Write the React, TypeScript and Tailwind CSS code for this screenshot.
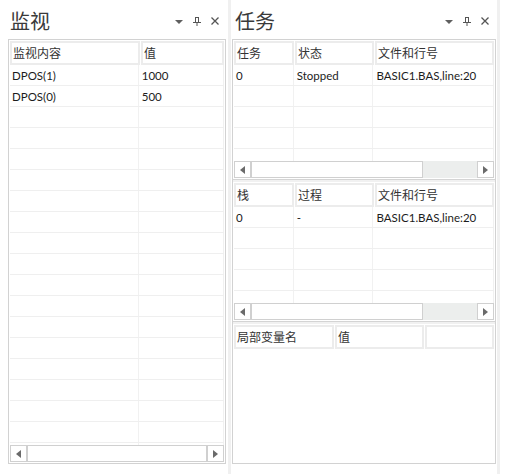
import React from "react";

const FONT = { fontFamily: 'Lato, "Noto Sans CJK SC", sans-serif' };

function TitleIcons() {
  return (
    <div className="flex items-center gap-[10px] text-[#5a5a5a]">
      <svg width="8" height="9" viewBox="0 0 8 9">
        <path d="M0 3 L8 3 L4 7 Z" fill="#5f5f5f" />
      </svg>
      <svg width="8" height="9" viewBox="0 0 8 9">
        <path d="M2.5 0.5 V5 M5.5 0.5 V5 M2 0.5 H6 M0 5.5 H8 M4 5.5 V9" stroke="#555" strokeWidth="1" fill="none" />
      </svg>
      <svg width="8" height="8" viewBox="0 0 8 8">
        <path d="M0.5 0.5 L7.5 7.5 M7.5 0.5 L0.5 7.5" stroke="#555" strokeWidth="1.3" fill="none" />
      </svg>
    </div>
  );
}

function Arrow({ dir }: { dir: "l" | "r" }) {
  return (
    <div className="w-[17px] h-[17px] border border-[#d0d0d0] bg-white flex items-center justify-center shrink-0">
      <svg width="5" height="8" viewBox="0 0 5 8">
        {dir === "l" ? <path d="M5 0 L0 4 L5 8 Z" fill="#6a6a6a" /> : <path d="M0 0 L5 4 L0 8 Z" fill="#6a6a6a" />}
      </svg>
    </div>
  );
}

function Scrollbar({ thumb }: { thumb?: number }) {
  return (
    <div className="h-[17px] flex shrink-0">
      <Arrow dir="l" />
      {thumb ? (
        <>
          <div className="h-[17px] border border-[#d0d0d0] bg-white" style={{ width: thumb }} />
          <div className="flex-1 bg-[#eceeed]" />
        </>
      ) : (
        <div className="flex-1 h-[17px] border border-[#d0d0d0] bg-white" />
      )}
      <Arrow dir="r" />
    </div>
  );
}

type Col = { w?: number; label: string };

function Header({ cols }: { cols: Col[] }) {
  return (
    <div className="flex h-[24px] shrink-0">
      {cols.map((c, i) => (
        <div
          key={i}
          className={`h-[24px] border-2 border-[#ececec] bg-white flex items-center pl-[1px] pt-[2px] text-[12px] text-[#333] ${c.w ? "shrink-0" : "flex-1"} ${i > 0 ? "ml-px" : ""}`}
          style={c.w ? { width: c.w } : undefined}
        >
          {c.label}
        </div>
      ))}
    </div>
  );
}

function Rows({ widths, data, count }: { widths: number[]; data: string[][]; count: number }) {
  const rows = [];
  for (let r = 0; r < count; r++) {
    const d = data[r] || [];
    rows.push(
      <div key={r} className="flex h-[21px] border-b border-[#efefef] shrink-0">
        {widths.map((w, i) => (
          <div
            key={i}
            className={`h-[20px] flex items-center pl-[2px] pt-[2px] text-[11.5px] text-[#1c1c1c] border-r border-[#f1f1f1] ${i > 0 ? "ml-px" : ""}`}
            style={{ width: w }}
          >
            {d[i] || ""}
          </div>
        ))}
        <div className="flex-1" />
      </div>
    );
  }
  return <div className="flex-1 flex flex-col overflow-hidden">{rows}</div>;
}

function Section({ cols, widths, data, thumb, scroll }: { cols: Col[]; widths: number[]; data: string[][]; thumb?: number; scroll: boolean }) {
  return (
    <div className="flex-1 flex flex-col min-h-0 px-px pt-px">
      <Header cols={cols} />
      <Rows widths={widths} data={data} count={20} />
      {scroll && <Scrollbar thumb={thumb} />}
      {scroll && <div className="h-px" />}
    </div>
  );
}

export default function App() {
  return (
    <div className="w-[507px] h-[474px] bg-white flex overflow-hidden" style={FONT}>
      {/* Left panel */}
      <div className="w-[226px] flex flex-col pl-2 pb-[10px]">
        <div className="h-[39px] flex items-center justify-between pl-[2px] pr-[7px] shrink-0">
          <span className="text-[20px] leading-none text-[#3a3a3a] mt-[2px]">监视</span>
          <div className="mt-[3px]"><TitleIcons /></div>
        </div>
        <div className="flex-1 w-[218px] border border-[#d2d2d2] flex flex-col min-h-0">
          <Section
            cols={[{ w: 130, label: "监视内容" }, { label: "值" }]}
            widths={[130, 85]}
            data={[["DPOS(1)", "1000"], ["DPOS(0)", "500"]]}
            scroll
          />
        </div>
      </div>
      {/* gutter */}
      <div className="w-[6px] flex">
        <div className="ml-[2px] w-[3px] h-full bg-[#f0f0f0]" />
      </div>
      {/* Right panel */}
      <div className="w-[264px] flex flex-col pb-[10px]">
        <div className="h-[39px] flex items-center justify-between pl-[3px] pr-[7px] shrink-0">
          <span className="text-[20px] leading-none text-[#3a3a3a] mt-[2px]">任务</span>
          <div className="mt-[3px]"><TitleIcons /></div>
        </div>
        <div className="flex-1 border border-[#d2d2d2] flex flex-col min-h-0">
          <Section
            cols={[{ w: 60, label: "任务" }, { w: 79, label: "状态" }, { label: "文件和行号" }]}
            widths={[60, 79, 120]}
            data={[["0", "Stopped", "BASIC1.BAS,line:20"]]}
            thumb={172}
            scroll
          />
          <div className="h-[3px] border-t border-[#d4d4d4] bg-[#f1f1f1] shrink-0" />
          <Section
            cols={[{ w: 60, label: "栈" }, { w: 79, label: "过程" }, { label: "文件和行号" }]}
            widths={[60, 79, 120]}
            data={[["0", "-", "BASIC1.BAS,line:20"]]}
            thumb={172}
            scroll
          />
          <div className="h-[3px] border-t border-[#d4d4d4] bg-[#f1f1f1] shrink-0" />
          <div className="flex-1 flex flex-col min-h-0 px-px pt-px">
            <Header cols={[{ w: 100, label: "局部变量名" }, { w: 89, label: "值" }, { label: "" }]} />
            <div className="flex-1" />
          </div>
        </div>
      </div>
      <div className="w-px" />
      <div className="w-[3px] h-full bg-[#f0f0f0]" />
      <div className="flex-1" />
    </div>
  );
}
